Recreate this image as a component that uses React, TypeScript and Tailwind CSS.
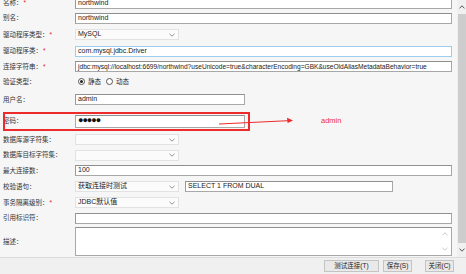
import React from 'react';

const font = { fontFamily: '"Liberation Sans", "Noto Sans CJK SC", sans-serif' };

function Label({ text, req }: { text: string; req?: boolean }) {
    return (
        <div className="w-[75px] shrink-0 pl-[3px] text-[6.5px] text-[#333] whitespace-nowrap">
            {text}：{req && <span className="text-[#e02020] ml-[1px]">*</span>}
        </div>
    );
}

function Input({ value, w, focus, small }: { value?: string; w: string; focus?: boolean; small?: boolean }) {
    return (
        <div
            className={`${w} h-[11px] bg-white border flex items-center pl-[2px] ${small ? 'text-[6.6px]' : 'text-[7px]'} text-[#222] overflow-hidden whitespace-nowrap ${
                focus ? 'border-[#9ccfee]' : 'border-[#a8a8a8] border-t-[#8f8f8f] border-l-[#999]'
            }`}
        >
            {value}
        </div>
    );
}

function Select({ value }: { value?: string }) {
    return (
        <div className="w-[104px] h-[11px] bg-[#fbfbfb] border border-[#e2e2e2] flex items-center justify-between pl-[2px] pr-[3px] text-[7px] text-[#222]">
            <span>{value}</span>
            <svg width="6" height="4" viewBox="0 0 6 4">
                <path d="M0.5 0.8 L3 3.2 L5.5 0.8" fill="none" stroke="#777" strokeWidth="0.8" />
            </svg>
        </div>
    );
}

function Row({ h, children }: { h: string; children: React.ReactNode }) {
    return <div className={`${h} flex items-center shrink-0`}>{children}</div>;
}

const FULL = 'w-[377px]';
const HALF = 'w-[170px]';

export default function App() {
    return (
        <div className="w-[466px] h-[274px] bg-[#f6f6f6] overflow-hidden flex flex-col relative" style={font}>
            <div className="h-[257px] flex">
                <div className="flex-1 flex flex-col -mt-[4px] relative">
                    <Row h="h-[14px]">
                        <Label text="名称" req />
                        <Input w={FULL} value="northwind" />
                    </Row>
                    <Row h="h-[16px]">
                        <Label text="别名" />
                        <Input w={FULL} value="northwind" />
                    </Row>
                    <Row h="h-[17px]">
                        <Label text="驱动程序类型" req />
                        <Select value="MySQL" />
                    </Row>
                    <Row h="h-[16px]">
                        <Label text="驱动程序类" req />
                        <Input w={FULL} value="com.mysql.jdbc.Driver" focus />
                    </Row>
                    <Row h="h-[15px]">
                        <Label text="连接字符串" req />
                        <Input
                            w={FULL}
                            small
                            value="jdbc:mysql://localhost:6699/northwind?useUnicode=true&characterEncoding=GBK&useOldAliasMetadataBehavior=true"
                        />
                    </Row>
                    <Row h="h-[15px]">
                        <Label text="验证类型" />
                        <div className="flex items-center gap-[3px] text-[6.5px] text-[#222] pl-[3px]">
                            <span className="w-[7px] h-[7px] rounded-full border border-[#555] bg-white flex items-center justify-center">
                                <span className="w-[3px] h-[3px] rounded-full bg-[#222]" />
                            </span>
                            <span>静态</span>
                            <span className="w-[7px] h-[7px] rounded-full border border-[#555] bg-white ml-[2px]" />
                            <span>动态</span>
                        </div>
                    </Row>
                    <Row h="h-[21px]">
                        <Label text="用户名" />
                        <Input w={HALF} value="admin" />
                    </Row>
                    <Row h="h-[22px]">
                        <Label text="密码" />
                        <div className="w-[170px] h-[13px] bg-white border border-[#a8a8a8] border-t-[#8f8f8f] flex items-center pl-[2px] text-[9px] tracking-[-1px] text-[#111]">
                            ●●●●●
                        </div>
                    </Row>
                    <Row h="h-[15px]">
                        <Label text="数据库源字符集" />
                        <Select />
                    </Row>
                    <Row h="h-[16px]">
                        <Label text="数据库目标字符集" />
                        <Select />
                    </Row>
                    <Row h="h-[15px]">
                        <Label text="最大连接数" />
                        <Input w={FULL} value="100" />
                    </Row>
                    <Row h="h-[17px]">
                        <Label text="校验语句" />
                        <Select value="获取连接时测试" />
                        <div className="ml-[6px]">
                            <Input w="w-[208px]" value="SELECT 1 FROM DUAL" />
                        </div>
                    </Row>
                    <Row h="h-[15px]">
                        <Label text="事务隔离级别" req />
                        <Select value="JDBC默认值" />
                    </Row>
                    <Row h="h-[16px]">
                        <Label text="引用标识符" />
                        <Input w={FULL} />
                    </Row>
                    <Row h="h-[31px]">
                        <Label text="描述" />
                        <div className="w-[377px] h-[29px] bg-white border border-[#a8a8a8] border-t-[#8f8f8f] flex justify-end pr-[3px]">
                            <div className="flex flex-col justify-between py-[4px]">
                                <svg width="6" height="4" viewBox="0 0 6 4">
                                    <path d="M0.5 3.2 L3 0.8 L5.5 3.2" fill="none" stroke="#bbb" strokeWidth="0.8" />
                                </svg>
                                <svg width="6" height="4" viewBox="0 0 6 4">
                                    <path d="M0.5 0.8 L3 3.2 L5.5 0.8" fill="none" stroke="#bbb" strokeWidth="0.8" />
                                </svg>
                            </div>
                        </div>
                    </Row>

                    {/* annotation */}
                    <div className="absolute left-[3px] top-[116px] w-[247px] h-[19px] border-2 border-[#ee2b2b]" />
                    <svg className="absolute left-[215px] top-[119px]" width="82" height="12" viewBox="0 0 82 12">
                        <path d="M4 9 L77 5.5" stroke="#ee2b2b" strokeWidth="1.2" />
                        <path d="M78 5.4 L72 2.8 L72.6 8 Z" fill="#ee2b2b" />
                    </svg>
                    <div className="absolute left-[321px] top-[119px] text-[7.5px] text-[#ee3030]">admin</div>
                </div>
                <div className="w-[9px] bg-[#f0f0f0] flex flex-col items-center">
                    <div className="h-[14px] flex items-center justify-center">
                        <svg width="6" height="4" viewBox="0 0 6 4">
                            <path d="M0.5 3.4 L3 0.8 L5.5 3.4" fill="none" stroke="#555" strokeWidth="1" />
                        </svg>
                    </div>
                    <div className="flex-1 w-[8px] bg-[#cdcdcd]" />
                    <div className="h-[14px] flex items-center justify-center">
                        <svg width="6" height="4" viewBox="0 0 6 4">
                            <path d="M0.5 0.6 L3 3.2 L5.5 0.6" fill="none" stroke="#555" strokeWidth="1" />
                        </svg>
                    </div>
                </div>
            </div>
            <div className="flex-1 bg-[#f0f0f0] border-t border-[#dcdcdc] flex items-start pt-[2px] pl-[324px] text-[6.5px] text-[#222]">
                <div className="w-[55px] h-[12px] bg-[#e9e9e9] border border-[#c4c4c4] flex items-center justify-center">测试连接(T)</div>
                <div className="w-[29px] h-[12px] ml-[4px] bg-[#e9e9e9] border border-[#c4c4c4] flex items-center justify-center">保存(S)</div>
                <div className="w-[29px] h-[12px] ml-[13px] bg-[#e9e9e9] border border-[#c4c4c4] flex items-center justify-center">关闭(C)</div>
            </div>
        </div>
    );
}
